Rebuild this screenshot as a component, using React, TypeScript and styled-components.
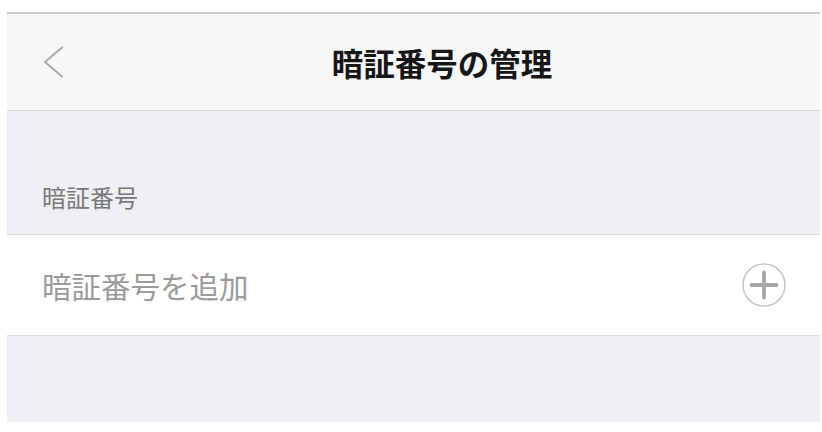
import React from 'react';
import styled, { createGlobalStyle } from 'styled-components';

const GlobalStyle = createGlobalStyle`
    html, body {
        margin: 0;
        padding: 0;
        background: #ffffff;
    }
    body {
        font-family: "Noto Sans CJK JP", "Noto Sans", sans-serif;
    }
`;

const Page = styled.div`
    padding: 12px 2px 10px 7px;
    background: #ffffff;
`;

const Screen = styled.div`
    height: 410px;
    display: flex;
    flex-direction: column;
    background: #efeff4;
`;

const NavBar = styled.div`
    height: 96px;
    display: grid;
    grid-template-columns: 90px 1fr 33px;
    align-items: center;
    background: #f7f7f9;
    border-top: 2px solid #c9c9cd;
    border-bottom: 1px solid #d4d4d8;
`;

const BackButton = styled.button`
    display: flex;
    align-items: center;
    padding: 0 0 0 35px;
    margin: 0;
    border: none;
    background: none;
    cursor: pointer;
`;

const Title = styled.h1`
    margin: 0;
    text-align: center;
    font-size: 31.5px;
    line-height: 40px;
    font-weight: 700;
    color: #161616;
`;

const SectionHeader = styled.div`
    padding: 73px 35px 24px;
    font-size: 24px;
    line-height: 26px;
    color: #777779;
`;

const Row = styled.div`
    height: 100px;
    display: flex;
    align-items: center;
    justify-content: space-between;
    padding: 0 33px 0 35px;
    background: #ffffff;
    border-top: 1px solid #dcdce0;
    border-bottom: 1px solid #dcdce0;
`;

const RowLabel = styled.span`
    font-size: 29.5px;
    line-height: 36px;
    color: #9a9a9c;
`;

const AddButton = styled.button`
    display: flex;
    padding: 0;
    margin: 0;
    border: none;
    background: none;
    cursor: pointer;
`;

const Chevron = () => (
    <svg width="22" height="32" viewBox="0 0 22 32">
        <path d="M20 1.5 L3 16 L20 30.5" fill="none" stroke="#acacb0" strokeWidth="2.2" strokeLinecap="round" strokeLinejoin="round" />
    </svg>
);

const PlusCircle = () => (
    <svg width="46" height="46" viewBox="0 0 46 46">
        <circle cx="23" cy="23" r="21" fill="none" stroke="#c8c8ca" strokeWidth="1.6" />
        <path d="M23 10.5 V35.5 M10.5 23 H35.5" stroke="#a6a6a8" strokeWidth="3.8" strokeLinecap="round" />
    </svg>
);

const App: React.FC = () => {
    return (
        <>
            <GlobalStyle />
            <Page>
                <Screen>
                    <NavBar>
                        <BackButton aria-label="戻る">
                            <Chevron />
                        </BackButton>
                        <Title>暗証番号の管理</Title>
                        <div />
                    </NavBar>
                    <SectionHeader>暗証番号</SectionHeader>
                    <Row>
                        <RowLabel>暗証番号を追加</RowLabel>
                        <AddButton aria-label="追加">
                            <PlusCircle />
                        </AddButton>
                    </Row>
                </Screen>
            </Page>
        </>
    );
};

export default App;
